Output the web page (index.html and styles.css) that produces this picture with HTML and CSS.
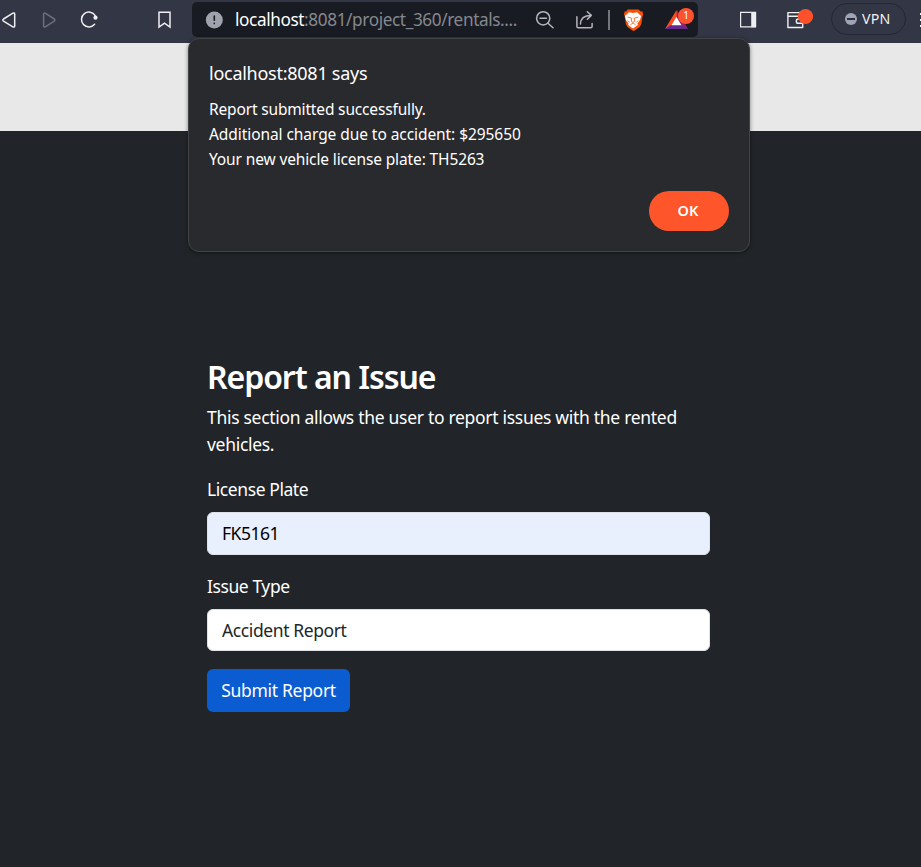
FILE: index.html
```html
<!DOCTYPE html>
<html lang="en">
<head>
<meta charset="utf-8">
<title>Rentals</title>
<link rel="stylesheet" href="styles.css">
</head>
<body>
<div class="toolbar">
  <svg class="icon back" viewBox="0 0 24 24"><path d="M16.7 6.1v11.8c0 1.1-.9 1.5-1.8.9L5.500 13.100c-.9-.6-.9-1.500 0-2.100l9.400-5.800c.9-.6 1.800-.2 1.800.9z"/></svg>
  <svg class="icon forward" viewBox="0 0 24 24"><path d="M6.600 6.100v11.800c0 1 .8 1.400 1.600.9l9.100-5.700c.8-.5.8-1.600 0-2.100L8.200 5.200c-.8-.5-1.600-.1-1.600.9z"/></svg>
  <svg class="icon reload" viewBox="0 0 24 24"><path d="M17.600 16.200A7.400 7.400 0 1 1 18.200 7.600"/><circle class="dot" cx="18.500" cy="9.700" r="2.100"/></svg>
  <svg class="icon bookmark" viewBox="0 0 24 24"><path d="M7 4.200h11v14.900l-5.500-3.900L7 19.100z"/></svg>
  <div class="omnibox">
    <svg class="icon info" viewBox="0 0 24 24"><circle cx="12.300" cy="12" r="8.500"/><path d="M12.300 8v4.300M12.300 15.400v.2"/></svg>
    <div class="url"><span class="host">localhost</span>:8081/project_360/rentals....</div>
    <svg class="icon search" viewBox="0 0 24 24"><circle cx="11.200" cy="10.300" r="6.600"/><path d="M8 10.300h6.500M16 15.200l5 4.500"/></svg>
    <svg class="icon share" viewBox="0 0 24 24"><path d="M3.900 8.700v9.800c0 .8.500 1.300 1.300 1.300h12.400c.9 0 1.500-.5 1.500-1.300v-3.100M7.400 16c.2-5.500 3-8.600 10.500-8.600M14.300 3.700l4 3.700-4 3.900"/></svg>
    <span class="separator"></span>
    <svg class="icon lion" viewBox="0 0 24 24"><path fill="#fb5008" d="M6.500 1.500h11l2.300 2 1.800-.1.600 3.400-.6 1.300-1.300 8-1.600 3-6.100 4.100-6.100-4.100-1.600-3-1.300-8-.6-1.300.6-3.400 1.800.1z"/><path fill="#fff" d="M8 4.300l4 .8 4-.8 4.100 3.700-1.200 4.200-2.400 3.200.3 1.500-4.800 3.500-4.800-3.500.3-1.500-2.400-3.200L3.900 8z"/><path class="face" d="M7 9.200l3 .8M17 9.200l-3 .8M10.800 10.200l-.6 3 1.800 1.200 1.800-1.200-.6-3M7 12.800l1.500 1.500M17 12.800l-1.500 1.500M9.800 16.500l2.200-1.500 2.200 1.500"/></svg>
    <div class="rewards">
      <svg class="triangle" viewBox="0 0 32 24"><path fill="#ff4c1c" d="M12.500 2L1 21l5.500-2 6.800-11z"/><path fill="#9e2066" d="M13 2l11 19-6-2.200L12.500 8z"/><path fill="#642b8d" d="M1 21l5.500-4h11.700L24 21z"/><path fill="#fff" d="M12.500 8.700L7.400 17.200h10.100z"/></svg>
      <span class="count">1</span>
    </div>
  </div>
  <svg class="icon sidebar" viewBox="0 0 24 24"><path d="M4.600 4.400h14.800v14.400H4.600z"/><path class="solid" d="M15.200 4h5v15.200h-5z"/></svg>
  <svg class="wallet" viewBox="0 0 30 24"><path d="M17.500 4.600H3.900v14.900h14.800V8.200H4M18.700 11h-4.500c-2.500 0-2.500 4.300 0 4.300h4.500"/><circle cx="21.500" cy="8.500" r="7.600"/></svg>
  <div class="vpn"><span class="vpn-dot"></span><span class="vpn-label">VPN</span></div>
  <span class="menu"></span>
</div>
<header class="banner"></header>
<main class="page">
  <form class="report">
    <h2>Report an Issue</h2>
    <p>This section allows the user to report issues with the rented<br>vehicles.</p>
    <label for="plate">License Plate</label>
    <input id="plate" class="field autofill" value="FK5161">
    <label for="type">Issue Type</label>
    <input id="type" class="field" value="Accident Report">
    <button type="button" class="submit">Submit Report</button>
  </form>
</main>
<section class="dialog" role="dialog">
  <h1>localhost:8081 says</h1>
  <p class="line1">Report submitted successfully.</p>
  <p class="line2">Additional charge due to accident: $295650</p>
  <p class="line3">Your new vehicle license plate: TH5263</p>
  <button type="button" class="ok">OK</button>
</section>
</body>
</html>
```
FILE: styles.css
```css
* { box-sizing: border-box; }
body {
  margin: 0;
  height: 867px;
  overflow: hidden;
  display: flex;
  flex-direction: column;
  background: #212529;
  color: #fff;
  font-family: "Noto Sans", sans-serif;
}
.toolbar {
  flex: none;
  height: 43px;
  padding-bottom: 4px;
  display: flex;
  align-items: center;
  background: #333645;
  overflow: hidden;
}
svg { display: block; flex: none; fill: none; stroke-linecap: round; stroke-linejoin: round; }
.icon { width: 24px; height: 24px; stroke: #eeeff2; stroke-width: 1.5; }
.back { margin-left: -2px; }
.forward { margin-left: 15px; stroke: #6c6f7c; }
.reload { margin-left: 16px; }
.reload .dot { fill: #eeeff2; stroke: none; }
.bookmark { margin-left: 51px; stroke-linejoin: miter; }
.omnibox {
  flex: none;
  width: 506px;
  height: 35px;
  margin-left: 16px;
  padding-left: 10px;
  display: flex;
  align-items: center;
  border-radius: 5px;
  background: #191b22;
}
.info { stroke: #191b22; stroke-width: 1.6; }
.info circle { fill: #a0a3ae; stroke: none; }
.url {
  width: 288px;
  margin-left: 9px;
  font-size: 17.2px;
  line-height: 24px;
  letter-spacing: -0.39px;
  color: #85888f;
  white-space: nowrap;
}
.host { color: #fff; }
.search { margin-left: 9px; stroke: #b4b6ba; }
.share { margin-left: 17px; stroke: #b4b6ba; }
.separator { width: 2px; height: 20px; margin-left: 11px; background: #74767b; }
.lion { margin-left: 11px; stroke: none; }
.lion .face { stroke: #fb5008; stroke-width: 0.8; }
.rewards { position: relative; margin-left: 19px; width: 32px; height: 24px; }
.triangle { width: 32px; height: 24px; }
.count {
  position: absolute;
  left: 14px;
  top: 0;
  width: 16px;
  height: 16px;
  border-radius: 50%;
  background: #ff5330;
  color: #fff;
  font-size: 10px;
  line-height: 15px;
  text-align: center;
}
.sidebar { margin-left: 38px; stroke-width: 1.2; stroke-linejoin: miter; }
.sidebar .solid { fill: #eeeff2; stroke: none; }
.wallet { width: 30px; height: 24px; margin-left: 24px; stroke: #eeeff2; stroke-width: 1.4; }
.wallet circle { fill: #ff5129; stroke: none; }
.vpn {
  flex: none;
  width: 75px;
  height: 32px;
  margin: 0 0 1px 17px;
  padding-left: 13px;
  display: flex;
  align-items: center;
  border: 1px solid #242631;
  border-radius: 16px;
}
.vpn-dot {
  width: 12px;
  height: 12px;
  border-radius: 50%;
  background: linear-gradient(#2d303e, #2d303e) center / 8px 2px no-repeat #a0a3b4;
}
.vpn-label { margin-left: 5px; font-size: 14.2px; line-height: 20px; letter-spacing: 0.2px; color: #eeeff2; }
.menu {
  flex: none;
  width: 2px;
  height: 14px;
  margin-left: 14px;
  background: repeating-linear-gradient(#eeeff2 0 2px, transparent 2px 6px);
}
.banner { flex: none; height: 88px; background: #e8e8e8; }
.page { flex: 1; padding: 224px 0 0 207px; }
.report { width: 503px; display: flex; flex-direction: column; align-items: flex-start; }
.report h2 { margin: 0 0 6px; font-size: 32px; line-height: 43px; font-weight: 600; letter-spacing: -1.05px; white-space: nowrap; }
.report p { margin: 0 0 18px; font-size: 17.5px; line-height: 27px; letter-spacing: -0.3px; white-space: nowrap; }
.report label { height: 27px; margin-bottom: 9px; font-size: 17.5px; line-height: 27px; letter-spacing: -0.42px; }
.field {
  width: 503px;
  height: 42px;
  margin: 0 0 18px;
  padding: 0 14px;
  border: 1px solid #dee2e6;
  border-radius: 6px;
  background: #fff;
  color: #212529;
  font: 400 17.5px/27px "Noto Sans", sans-serif;
  letter-spacing: -0.4px;
}
.autofill { height: 43px; padding-bottom: 1px; background: #e8effd; color: #000; letter-spacing: -0.5px; }
.submit {
  width: 143px;
  height: 43px;
  padding: 0;
  border: 0;
  border-radius: 6px;
  background: #0b5bd1;
  color: #fff;
  font: 17.5px/27px "Noto Sans", sans-serif;
  letter-spacing: -0.3px;
}
.dialog {
  position: absolute;
  left: 188px;
  top: 38px;
  width: 562px;
  height: 214px;
  padding: 22px 20px 0;
  display: flex;
  flex-direction: column;
  border: 1px solid #414347;
  border-radius: 11px;
  background: #292a2d;
  box-shadow: 0 1px 4px rgba(0, 0, 0, 0.45);
}
.dialog h1 { margin: 0 0 11px; font-size: 18px; line-height: 25px; font-weight: 400; letter-spacing: -0.26px; }
.dialog p { margin: 0; font-size: 15.5px; line-height: 25px; letter-spacing: -0.16px; }
.dialog .line2 { letter-spacing: -0.07px; }
.dialog .line3 { letter-spacing: -0.13px; }
.ok {
  align-self: flex-end;
  width: 80px;
  height: 40px;
  margin-top: 19px;
  padding: 0 2px 2px 0;
  border: 0;
  border-radius: 20px;
  background: #ff552a;
  color: #fff;
  font: 600 14.5px/20px "Noto Sans", sans-serif;
}
```
